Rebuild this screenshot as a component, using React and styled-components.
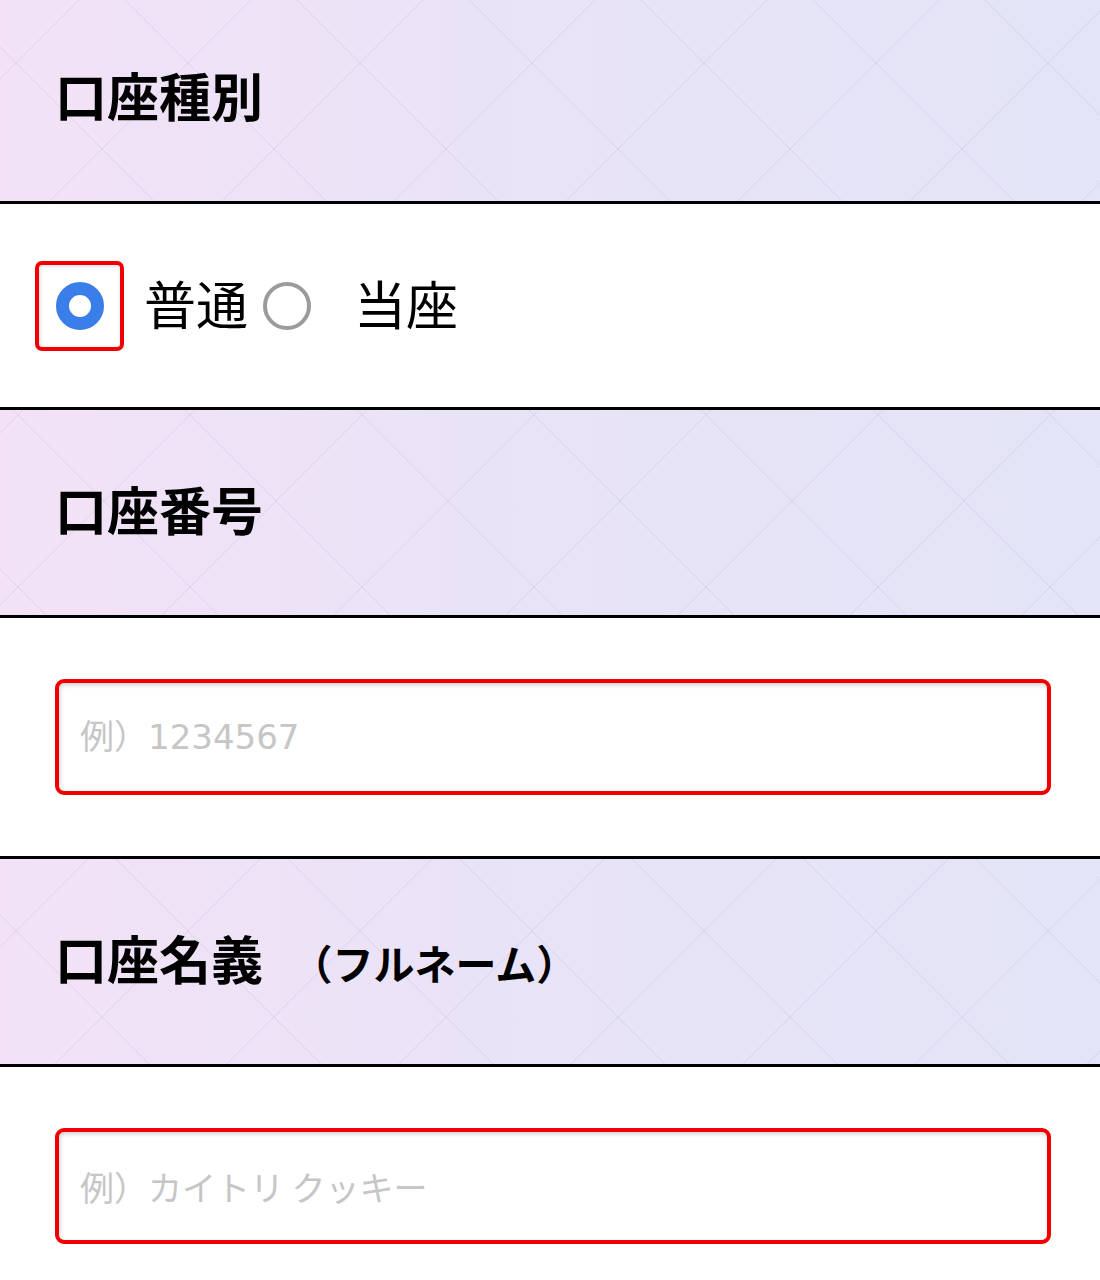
import React from 'react';
import styled, { createGlobalStyle } from 'styled-components';

const GlobalStyle = createGlobalStyle`
  html, body {
    margin: 0;
    padding: 0;
    background: #fff;
  }
  body {
    font-family: "Noto Sans CJK JP", "Noto Sans", sans-serif;
    color: #000;
  }
`;

const Page = styled.div`
  width: 1100px;
  margin-top: -4px;
`;

const lattice = (angle) =>
  `linear-gradient(${angle}, transparent calc(50% - 0.7px), rgba(160, 150, 195, 0.22) 50%, transparent calc(50% + 0.7px))`;

const Heading = styled.div`
  display: flex;
  align-items: center;
  height: 205px;
  padding-left: 55px;
  border-bottom: 3px solid #000;
  background:
    ${lattice('45deg')} ${(p) => p.$lx}px ${(p) => p.$ly}px / 172px 172px,
    ${lattice('-45deg')} ${(p) => p.$lx}px ${(p) => p.$ly}px / 172px 172px,
    linear-gradient(90deg, #f3e2f6 0%, #e9e3f7 45%, #e3e4f7 100%);
`;

const Title = styled.h2`
  margin: 0;
  padding-bottom: 8px;
  font-size: 52px;
  font-weight: 700;
  line-height: 1;
  white-space: nowrap;
`;

const Sub = styled.span`
  margin-left: 8px;
  font-size: 41px;
  font-weight: 700;
`;

const Body = styled.div`
  display: flex;
  align-items: center;
  height: ${(p) => p.$h}px;
  padding: ${(p) => (p.$field ? '0 49px 0 55px' : '0 0 0 35px')};
  border-bottom: ${(p) => (p.$last ? 'none' : '3px solid #000')};
  background: #fff;
`;

const Highlight = styled.span`
  display: flex;
  align-items: center;
  justify-content: center;
  width: 89px;
  height: 90px;
  box-sizing: border-box;
  border: 4.5px solid #f20000;
  border-radius: 7px;
  box-shadow: inset 1px 1px 4px rgba(0, 0, 0, 0.15);
`;

const Radio = styled.input.attrs({ type: 'radio' })`
  appearance: none;
  -webkit-appearance: none;
  margin: 0;
  width: 48px;
  height: 48px;
  box-sizing: border-box;
  border-radius: 50%;
  border: 4px solid #9b9b9b;
  background: #fff;
  flex-shrink: 0;

  &:checked {
    border: 13.5px solid #3a7ee9;
  }
`;

const Option = styled.label`
  display: flex;
  align-items: center;
`;

const OptionText = styled.span`
  font-size: 52px;
  line-height: 1;
  padding-bottom: 6px;
  margin-left: ${(p) => p.$gap}px;
`;

const Plain = styled.span`
  display: flex;
  margin-left: ${(p) => p.$gap}px;
`;

const TextInput = styled.input`
  width: 100%;
  height: 116px;
  box-sizing: border-box;
  border: 4.5px solid #f20000;
  border-radius: 9px;
  padding: 0 0 0 21px;
  font-family: ${(p) => (p.$digits ? '"DejaVu Sans", ' : '')}"Noto Sans CJK JP", "Noto Sans", sans-serif;
  font-size: 34px;
  color: #222;
  background: #fff;
  box-shadow: inset 1px 2px 4px rgba(0, 0, 0, 0.18);
  outline: none;

  &::placeholder {
    color: #c6c6c6;
  }
`;

export default function App() {
  return (
    <Page>
      <GlobalStyle />

      <Heading $lx={16} $ly={67}>
        <Title>口座種別</Title>
      </Heading>
      <Body $h={203}>
        <Option>
          <Highlight>
            <Radio name="kind" value="futsu" defaultChecked />
          </Highlight>
          <OptionText $gap={20}>普通</OptionText>
        </Option>
        <Option>
          <Plain $gap={15}>
            <Radio name="kind" value="toza" />
          </Plain>
          <OptionText $gap={43}>当座</OptionText>
        </Option>
      </Body>

      <Heading $lx={18} $ly={5}>
        <Title>口座番号</Title>
      </Heading>
      <Body $h={238} $field>
        <TextInput $digits inputMode="numeric" placeholder="例）1234567" />
      </Body>

      <Heading $lx={16} $ly={72}>
        <Title>
          口座名義<Sub>　（フルネーム）</Sub>
        </Title>
      </Heading>
      <Body $h={238} $field $last>
        <TextInput placeholder="例）カイトリ クッキー" />
      </Body>
    </Page>
  );
}
